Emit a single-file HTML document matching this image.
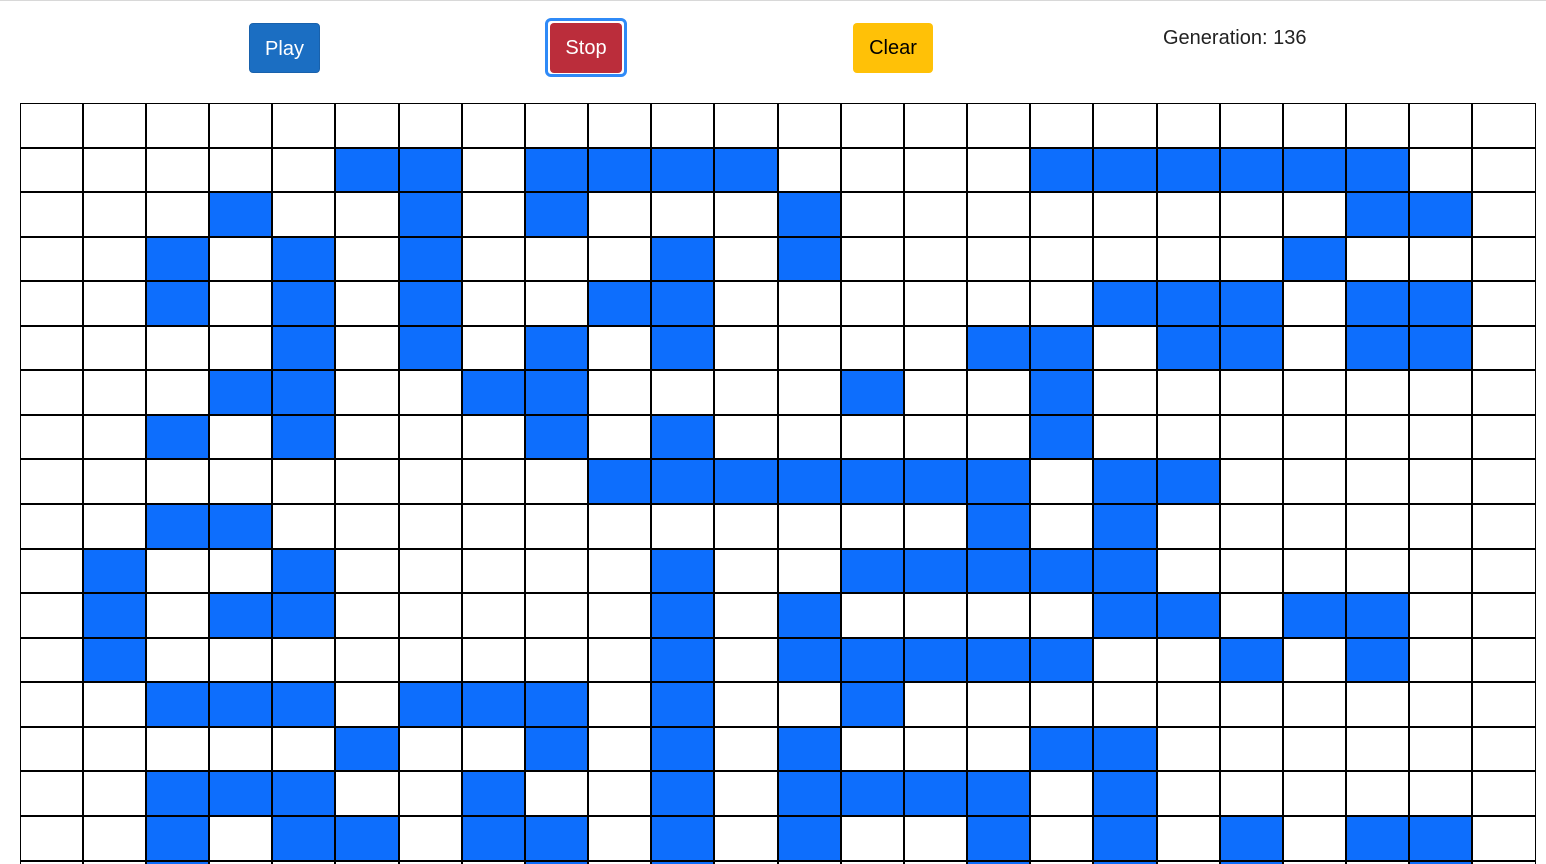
<!DOCTYPE html>
<html><head><meta charset="utf-8"><style>
html,body{margin:0;width:1546px;height:864px;overflow:hidden;background:#fff;font-family:"Liberation Sans",sans-serif;position:relative}
.top{position:absolute;left:0;top:0;width:1546px;height:1px;background:#d8d8d8}
.btn{position:absolute;color:#fff;font-size:20px;text-align:center;border-radius:4px;box-sizing:border-box}
.gen{position:absolute;left:1163px;top:27px;font-size:20px;color:#222}
.c{position:absolute;box-sizing:border-box;border:1px solid #000;background:#fff}
.on{background:#0d6efd}
</style></head><body>
<div class="top"></div>
<div class="btn" style="left:249px;top:23px;width:71px;height:50px;line-height:51px;background:#1b6ec2;border:1px solid #1861ac">Play</div>
<div style="position:absolute;left:545px;top:18px;width:82px;height:59px;border:3px solid #2f8af7;border-radius:6px;box-sizing:border-box"></div>
<div class="btn" style="left:550px;top:23px;width:72px;height:50px;line-height:51px;background:#bb2d3b">Stop</div>
<div class="btn" style="left:853px;top:23px;width:80px;height:50px;line-height:51px;background:#ffc107;color:#000">Clear</div>
<div class="gen">Generation: 136</div>
<div id="g"></div>
<script>
var xs=[20,83,146,209,272,335,399,462,525,588,651,714,778,841,904,967,1030,1093,1157,1220,1283,1346,1409,1472,1536];
var on=[[],[5,6,8,9,10,11,16,17,18,19,20,21],[3,6,8,12,21,22],[2,4,6,10,12,20],[2,4,6,9,10,17,18,19,21,22],[4,6,8,10,15,16,18,19,21,22],[3,4,7,8,13,16],[2,4,8,10,16],[9,10,11,12,13,14,15,17,18],[2,3,15,17],[1,4,10,13,14,15,16,17],[1,3,4,10,12,17,18,20,21],[1,10,12,13,14,15,16,19,21],[2,3,4,6,7,8,10,13],[5,8,10,12,16,17],[2,3,4,7,10,12,13,14,15,17],[2,4,5,7,8,10,12,15,17,19,21,22],[2,8,10,15,17,19,22]];
var h='';
for(var r=0;r<18;r++){var t=Math.round(103+r*44.56);var b=Math.round(103+(r+1)*44.56);
for(var c=0;c<24;c++){var cls=on[r].indexOf(c)>=0?'c on':'c';
h+='<div class="'+cls+'" style="left:'+xs[c]+'px;top:'+t+'px;width:'+(xs[c+1]-xs[c])+'px;height:'+(b-t)+'px"></div>';}}
document.getElementById('g').innerHTML=h;
</script>
</body></html>
